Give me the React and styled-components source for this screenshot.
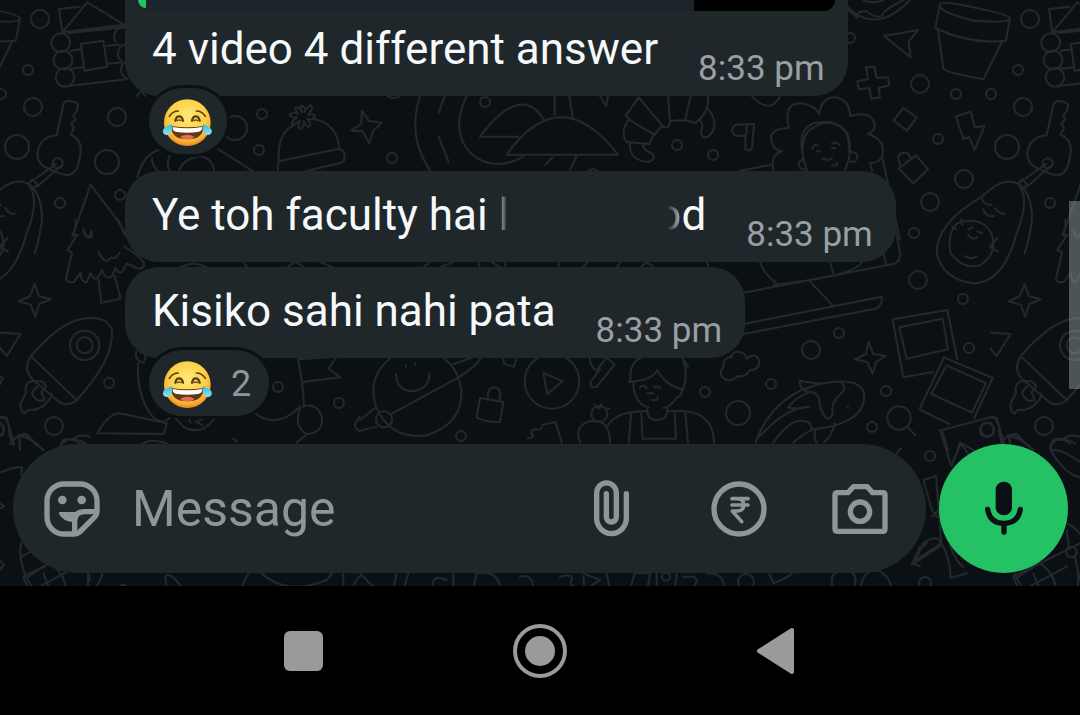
import React from "react";
import styled, { createGlobalStyle } from "styled-components";

const c = {
  wall: "#0b1014",
  doodle: "#22282c",
  panel: "#20272a",
  text: "#f5f9fc",
  time: "#999fa2",
  icon: "#8d9699",
  green: "#24c265",
  nav: "#9a9a9a",
};

const GlobalStyle = createGlobalStyle`
  * { box-sizing: border-box; }
  body { margin: 0; background: #000; font-family: Roboto, "Liberation Sans", sans-serif; }
  button { padding: 0; border: 0; background: none; cursor: pointer; display: grid; place-items: center; }
`;

const Screen = styled.div`
  min-height: 100vh;
  display: flex;
  flex-direction: column;
`;

const Chat = styled.main`
  position: relative;
  isolation: isolate;
  overflow: hidden;
  background: ${c.wall};
  padding-bottom: 13px;
`;

const WallpaperSvg = styled.svg`
  position: absolute;
  inset: 0;
  width: 100%;
  height: 100%;
  z-index: -1;
`;

const Messages = styled.div`
  display: flex;
  flex-direction: column;
  align-items: flex-start;
  padding: 0 24px 28px 125px;
`;

const Bubble = styled.article`
  background: ${c.panel};
  border-radius: ${(p) => (p.$continued ? "0 0 34px 34px" : "34px")};
  margin-top: ${(p) => p.$space || 0}px;
`;

const Quote = styled.div`
  display: flex;
  justify-content: space-between;
  height: 11px;
  margin: 0 13px;
  background: #1d252b;
  border-radius: 0 0 20px 20px;
  overflow: hidden;
`;

const QuoteBar = styled.span`
  width: 8px;
  height: 8px;
  background: ${c.green};
  border-bottom-left-radius: 8px;
`;

const QuoteThumb = styled.span`
  width: 141px;
  background: #000;
`;

const Line = styled.div`
  display: flex;
  align-items: flex-end;
  gap: 40px;
  padding: ${(p) => (p.$continued ? "12px 23px 7px 27px" : "18px 23px 7px 27px")};
`;

const Body = styled.p`
  margin: 0 0 14px;
  font-size: 44px;
  line-height: 52px;
  color: ${c.text};
  white-space: nowrap;
`;

const Time = styled.time`
  font-size: 35px;
  line-height: 40px;
  color: ${c.time};
  white-space: nowrap;
`;

const Faded = styled.span`
  background: linear-gradient(${(p) => p.$to}, ${c.panel} ${(p) => p.$start}%, #b4b8ba);
  background-clip: text;
  -webkit-background-clip: text;
  color: transparent;
`;

const Blank = styled.span`
  display: inline-block;
  width: 147px;
`;

const Reaction = styled.button`
  grid-auto-flow: column;
  gap: 19px;
  height: 66px;
  margin: -8px 0 0 24px;
  padding: 2px ${(p) => (p.$many ? 18 : 15)}px 0 14px;
  border-radius: 33px;
  background: ${c.panel};
  box-shadow: 0 0 0 3px ${c.wall};
  position: relative;
`;

const Count = styled.span`
  font: 36px Roboto, sans-serif;
  color: ${c.icon};
`;

const Composer = styled.form`
  display: flex;
  align-items: center;
  gap: 13px;
  padding: 0 12px 0 13px;
`;

const Field = styled.div`
  flex: 1;
  min-width: 0;
  display: flex;
  align-items: center;
  gap: 65px;
  height: 129px;
  padding: 0 38px 0 31px;
  border-radius: 65px;
  background: ${c.panel};
`;

const Entry = styled.div`
  flex: 1;
  min-width: 0;
  display: flex;
  align-items: center;
  gap: 32px;
`;

const MessageInput = styled.input`
  flex: 1;
  min-width: 0;
  border: 0;
  padding: 0;
  outline: 0;
  background: none;
  font: 50px Roboto, sans-serif;
  color: ${c.text};
  &::placeholder { color: ${c.icon}; opacity: 1; }
`;

const IconSvg = styled.svg`
  display: block;
  flex: none;
  width: 56px;
  height: 56px;
  overflow: visible;
  fill: none;
  stroke: currentColor;
  stroke-width: 16;
  stroke-linecap: round;
  stroke-linejoin: round;
`;

const IconButton = styled.button`
  color: ${c.icon};
`;

const MicButton = styled.button`
  flex: none;
  width: 129px;
  height: 129px;
  border-radius: 50%;
  background: ${c.green};
  color: ${c.wall};
`;

const ScrollThumb = styled.div`
  position: absolute;
  right: 0;
  top: 201px;
  width: 11px;
  height: 188px;
  background: rgba(150, 158, 162, 0.48);
`;

const NavBar = styled.nav`
  flex: 1;
  min-height: 130px;
  background: #000;
  display: flex;
  align-items: center;
  justify-content: center;
`;

const NavButton = styled.button`
  width: 236px;
  height: 80px;
`;

const EmojiSvg = styled.svg`
  display: block;
  width: 49px;
  height: 49px;
  overflow: visible;
`;

function JoyEmoji() {
  return (
    <EmojiSvg viewBox="0 0 147 147" role="img" aria-label="Face with tears of joy">
      <defs>
        <radialGradient id="face" cx="50%" cy="36%" r="64%">
          <stop offset="0.1" stopColor="#fee671" />
          <stop offset="0.6" stopColor="#fdcf45" />
          <stop offset="0.85" stopColor="#f9b032" />
          <stop offset="1" stopColor="#e98722" />
        </radialGradient>
        <linearGradient id="tear" x1="0" y1="0" x2="0" y2="1">
          <stop offset="0" stopColor="#35b5d8" />
          <stop offset="1" stopColor="#8fe6f5" />
        </linearGradient>
      </defs>
      <circle cx="73" cy="74" r="70" fill="url(#face)" />
      <g fill="none" stroke="#5b3b12" strokeLinecap="round">
        <path d="M19 55Q29 39 46 39M127 55Q117 39 100 39" strokeWidth="5" />
        <path d="M37 68Q40 55 48 55Q57 55 60 68M87 68Q90 55 98 55Q107 55 110 68" strokeWidth="7" />
        <path d="M43 68Q48 63 54 68M93 68Q98 63 104 68" strokeWidth="4" />
      </g>
      <path d="M25 84Q73 92 121 84Q122 124 73 124Q24 124 25 84Z" fill="#5c3a16" />
      <path d="M29 87Q73 95 117 87Q118 99 108 101Q73 107 38 101Q28 99 29 87Z" fill="#fffdf5" />
      <path d="M51 117Q73 104 95 117Q87 124 73 124Q59 124 51 117Z" fill="#e9695f" />
      <path d="M26 78Q30 95 23 105Q14 116 3 108Q-5 98 5 89Q13 84 26 78Z" fill="url(#tear)" />
      <path d="M120 78Q116 95 123 105Q132 116 143 108Q151 98 141 89Q133 84 120 78Z" fill="url(#tear)" />
    </EmojiSvg>
  );
}

const circles = [
  [40, 19, 9], [28, 70, 5], [33, 107, 9], [117, 117, 9], [17, 147, 12], [107, 162, 12],
  [60, 203, 5], [120, 195, 5], [235, 128, 12], [262, 114, 5], [259, 150, 5], [485, 102, 5],
  [392, 158, 5], [677, 145, 5], [713, 155, 5], [850, 38, 5], [920, 84, 9], [956, 94, 5],
  [991, 94, 5], [938, 139, 5], [964, 179, 9], [930, 202, 9], [914, 233, 5], [109, 383, 5],
  [54, 426, 9], [278, 387, 5], [339, 403, 5], [705, 392, 5], [461, 436, 5], [918, 280, 9],
  [963, 299, 5], [839, 333, 5], [811, 350, 9], [969, 348, 5], [771, 384, 5], [738, 413, 12],
  [886, 391, 5], [872, 427, 5], [930, 456, 5], [987, 430, 7], [925, 583, 6], [746, 582, 8],
];

const doodles = [
  {
    at: [0, 0],
    d: [
      "M187 97L262 7L372 74ZM187 97L177 27L240 20M205 99L375 82M212 152L246 148M316 138L360 134M212 206L250 202M322 192L365 187M205 258L380 238",
      "M242 132L310 122L322 200L254 212Z",
      "M154 128a28 28 0 1 0 56 0a28 28 0 1 0-56 0M161 180a28 28 0 1 0 56 0a28 28 0 1 0-56 0M167 232a28 28 0 1 0 56 0a28 28 0 1 0-56 0M376 82a28 28 0 0 0-28 44M374 134a28 28 0 0 0-8 50M376 186a28 28 0 0 0 6 50",
      "M170 406L190 315Q194 300 212 304Q236 307 234 318L230 334L220 346L226 358L214 372L222 384L212 404Q246 420 242 454Q236 520 206 525Q185 525 150 508Q112 494 112 462Q118 410 170 406Z",
      "M158 490a15 15 0 1 0 30 0a15 15 0 1 0-30 0M168 492L106 536M182 498L114 558M84 552L98 538L112 554L98 568Z",
      "M410 288L424 272L436 288M412 530Q430 464 476 450M456 474Q456 500 476 514M510 466Q498 490 508 514M536 514Q550 476 598 468Q640 474 642 514M656 448L760 514",
      "M836 482Q832 400 880 376M944 358Q1012 372 1018 448M838 486Q832 486 834 512M836 484L1018 446Q1036 452 1034 474Q1034 486 1020 490L920 512",
      "M906 336Q896 316 908 318Q918 324 914 336Q928 310 936 318Q938 328 924 344Q948 340 944 352Q936 362 922 356Q936 376 926 380Q916 380 912 364Q910 388 900 386Q892 380 900 362Q880 380 876 370Q876 360 892 352Q868 354 870 342Q880 334 894 342Q880 324 890 322Q900 324 906 336Z",
      "M1054 392L1084 372L1086 332L1106 362L1146 368L1120 392L1108 430L1088 394Z",
      "M220 700L272 554L362 674L378 706M250 688Q264 730 274 694M220 700L234 706",
    ],
  },
  {
    at: [360, 0],
    d: [
      "M180 288Q140 410 212 514M254 288L236 338M236 410L266 486M320 288Q270 390 330 458Q400 520 490 470M360 410Q480 250 550 356M360 410H474M440 464Q600 240 774 464ZM584 288V346M628 288L638 350M650 468L628 514M578 472L556 494M720 288L738 318L744 288",
      "M836 292L910 380M836 292L798 346Q802 360 884 404M804 362Q780 400 800 426L868 432Q882 400 884 404L904 380Q930 390 930 364L924 288M930 364Q980 356 1004 370Q1048 340 1044 288M992 288L976 358M1044 326Q1072 360 1060 392Q1034 430 1022 398Q1034 370 1018 360M810 430Q806 482 866 486Q894 474 872 458Q848 450 850 434",
      "M684 514Q700 500 714 514M84 290Q100 298 116 290",
    ],
  },
  {
    at: [720, 0],
    d: [
      "M376 14Q464 110 570 0M376 26Q400 40 412 54Q410 30 440 34Q480 66 492 36Q510 20 550 0M430 0Q460 14 490 0",
      "M492 108L594 90L566 124L572 172Z",
      "M438 202L464 200L470 234L504 232L508 256L476 264L480 292L454 296L448 264L416 268L412 244L444 238Z",
      "M660 12Q670 2 770 24Q870 44 870 56Q866 70 760 62Q650 34 660 12ZM660 12L646 84Q750 134 858 122L870 56M654 88L670 206Q680 218 790 238L846 126",
      "M550 324L590 352L562 392L520 362ZM536 506L588 466L624 508L580 550ZM544 500Q526 466 544 460Q566 454 572 474",
      "M708 350L752 334L764 382L794 378L764 450L748 412L730 416Z",
      "M96 290Q150 344 180 290",
      "M206 380Q190 312 240 310Q284 314 298 342Q304 292 346 292Q390 300 390 348Q460 330 464 376Q464 396 444 402Q500 420 486 470Q476 490 450 488L456 512M206 384Q146 386 154 424Q160 450 186 454Q150 464 160 512",
      "M262 512Q232 440 264 394Q330 340 382 400Q402 450 374 512M250 470Q230 390 280 370Q350 356 376 394Q390 420 386 452M250 478Q232 484 238 500Q242 510 258 508M392 456Q416 456 412 474Q406 490 392 484M276 446Q280 434 292 434M336 430Q350 424 358 434M290 454h10M336 444h10M308 476Q330 484 336 474M336 496Q352 498 352 488",
      "M102 372L48 374Q30 386 40 402Q50 412 76 406V446Q88 458 96 444ZM80 376V402",
      "M486 468L540 720M60 512L154 494",
      "M812 568Q860 530 900 554Q936 584 936 660Q928 720 914 760M812 568L780 594Q650 670 650 760Q670 840 760 850Q850 850 890 700Q930 600 898 556M786 598Q794 616 814 614M790 628Q800 654 822 648M826 624Q840 646 854 640",
      "M712 670Q784 646 814 700Q836 760 780 796Q730 810 692 760Q680 700 712 670ZM696 680L708 688M724 658L728 674M746 688L758 682M772 694L786 700M744 704Q756 722 772 712M734 768Q752 780 770 770M810 740L832 714M810 742L834 754",
    ],
  },
  {
    at: [0, 220],
    d: [
      "M226 0Q230 30 216 44L228 50L202 90L216 98L198 176Q202 190 222 186L242 158Q244 190 260 186L272 160Q282 184 294 172L306 150Q318 182 336 168L346 144Q360 168 370 150L380 130L410 144Q434 150 432 128Q410 100 372 80M250 30Q256 60 276 50L274 32M296 96Q316 140 334 112Q350 120 358 98M354 0L374 44M296 180L304 248L362 236L344 168",
      "M104 192L116 228L152 238L118 252L106 290L92 254L56 244L90 228Z",
      "M92 408Q180 310 240 298Q320 282 336 330Q342 420 230 540ZM210 376a44 44 0 1 0 88 0a44 44 0 1 0-88 0M230 376a24 24 0 1 0 48 0a24 24 0 1 0-48 0M92 410Q66 450 100 480L180 548Q204 560 232 540",
      "M100 482Q70 490 78 520L62 548Q60 574 74 582Q78 566 102 570Q136 562 152 532L154 520M104 486Q130 476 138 500L124 516L134 540Q120 544 110 540M112 500Q84 520 108 536",
      "M-40 335L62 342L20 408Z",
      "M0 592L20 594L40 676M0 610Q16 620 8 644M30 672L54 646L96 660L130 690M292 640Q330 570 370 582L500 610L492 642L296 640M180 680Q206 640 240 672M420 680Q440 650 500 670",
      "M410 394Q400 420 432 428M420 396Q444 400 434 422M414 430Q410 520 450 580Q480 620 510 594M526 594L550 620Q600 650 642 598M566 596L572 608M610 596L588 606L608 616M766 580Q830 630 900 560M894 416Q910 500 912 554M896 418L1010 410L986 446L1020 472L908 486M900 566Q880 620 920 642Q970 640 966 590Q950 546 908 560M890 668L920 642M700 656L712 666M1080 590Q1050 620 1080 634",
      "M540 142Q580 120 620 142M730 126L742 142M862 142L886 124L912 142M960 126L1000 142",
    ],
  },
  {
    at: [360, 220],
    d: [
      "M92 414Q20 470 48 560Q90 660 200 646Q310 610 304 510Q294 444 250 414M0 600L48 562M0 632L50 620M48 598a24 24 0 1 0 48 0a24 24 0 1 0-48 0M90 584L300 470Q350 436 362 414M280 432L334 414M108 462Q110 514 160 514Q210 506 208 458M138 436v4M166 430v4",
      "M430 414L432 432L462 440L470 414M360 534L430 546L420 606Q380 608 350 592ZM384 532Q382 500 408 502Q428 510 418 542",
      "M494 484a82 82 0 1 0 164 0a82 82 0 1 0-164 0M550 458L608 484L562 522Z",
      "M690 414Q690 440 710 452L740 412L764 434L710 500Q690 508 692 486L720 448",
      "M694 582a24 24 0 1 0 48 0a24 24 0 1 0-48 0M704 554L718 566L724 552M736 566L748 566M660 668Q640 610 700 602Q750 602 750 668M504 656L520 650Q506 628 524 628Q544 634 548 614L586 606L606 668",
      "M842 414Q806 430 812 486Q880 480 892 450Q920 500 970 508Q986 460 968 414M806 486H820Q820 550 866 562M966 508Q966 530 950 532Q930 564 910 564M862 564Q860 600 890 600Q924 600 922 564M840 502Q850 492 860 504M884 502Q892 494 900 504M862 520H880M876 540Q894 544 894 530M742 618Q770 572 860 574M926 574Q1060 560 1062 668M814 576L806 668M976 576L984 668M844 578L848 656H948L944 578M968 416L984 440",
      "M190 142L210 126M240 142L280 126M354 124L360 142M396 126L420 142M436 124V142M596 126V142M668 142L686 124M770 142L784 124M842 142Q860 116 880 142M1040 124L1046 142",
    ],
  },
  {
    at: [720, 220],
    d: [
      "M70 218L520 132Q544 124 540 96L520 0M120 126Q130 160 170 190M330 126L340 160M160 194Q400 170 426 126M490 100L498 132M270 184L338 256M70 312L486 230Q486 260 466 266L70 342",
      "M518 298L682 270L712 418M518 298L550 472L640 456M538 322L668 296L684 388L560 416ZM672 412L818 474L762 596M672 412L598 568L688 612M680 436L798 490L756 578L634 522ZM666 630L820 590Q832 592 852 670M666 630L684 690M712 690L720 668L760 690",
      "M446 366L460 402L498 408L468 426L458 462L442 426L404 418L438 402Z",
      "M782 628a20 20 0 1 0 40 0a20 20 0 1 0-40 0M502 594a35 35 0 1 0 70 0a35 35 0 1 0-70 0M564 622L586 646M870 690L868 648Q880 636 940 690",
      "M10 440Q10 410 34 412Q40 388 66 398Q78 404 80 416Q106 394 118 422Q120 450 90 450Q76 474 54 468Q30 490 10 474Q-6 460 10 440Z",
      "M106 668Q160 520 310 490Q420 470 432 520Q440 610 280 628Q250 640 220 668M310 490Q290 492 240 482Q236 510 268 516Q300 514 300 560Q322 620 338 580Q330 550 364 520Q380 500 366 490M268 560Q200 560 118 650M160 668Q220 580 270 610L276 628M286 630Q280 650 290 668M344 610Q340 640 312 668M382 560h2M266 518Q230 530 204 562Q230 570 268 560",
      "M992 690Q990 650 1030 660Q1042 640 1080 650",
    ],
  },
  {
    at: [0, 430],
    d: [
      "M0 128Q40 110 66 112L64 136M64 340Q50 400 100 480M66 380L100 360M80 444L140 404M100 480L230 410M264 424V480M310 424Q300 460 280 480M500 480L496 440Q510 420 550 480M720 480L746 428M780 426Q860 500 980 450L1000 426M1030 426V480M1056 480Q1070 440 1080 440M0 220L12 228L0 236M0 392L12 404L0 420M150 400Q190 424 200 480M350 480Q370 450 390 480",
      "M1080 430L1130 480H1180L1190 430M1210 480L1226 430M1300 480Q1290 430 1340 450M1360 430V480M1420 480L1430 430Q1500 420 1500 480M1560 440Q1600 430 1600 480",
    ],
  },
  {
    at: [560, 430],
    d: [
      "M0 440Q40 430 36 450Q20 460 60 480M70 440L74 480M70 430L120 450L90 470M140 430L150 480M210 480L224 430H270L262 480M290 430V480M306 440a12 12 0 1 0 24 0a12 12 0 1 0-24 0M350 430L344 480M370 440H400Q420 450 400 470M440 430Q500 430 490 480M626 426L640 460Q690 440 700 426M820 480Q800 420 860 420Q900 430 880 480M900 480Q910 410 960 424Q990 440 996 480M1010 70L1022 56M1060 400L1080 350M1060 400L1080 410",
    ],
  },
  {
    at: [900, 430],
    d: [
      "M70 150L108 138L124 340Q150 380 152 444L200 430M70 150L96 240L110 260M96 260L116 240M70 340Q110 310 124 340L46 390ZM124 346L36 404Q50 360 80 340M150 346Q170 400 190 410M120 0L154 108L182 40L204 70M330 36Q320 10 350 12L380 46M296 0Q300 20 304 34",
      "M526 40Q490 20 460 30Q440 60 480 100Q520 150 560 140M452 62Q480 50 560 110M340 440L540 340M340 440L356 480M400 430L420 480M498 366a16 16 0 1 0 32 0a16 16 0 1 0-32 0M506 350L500 300M524 378L540 450M500 280Q530 290 550 330",
    ],
  },
];

function Wallpaper() {
  return (
    <WallpaperSvg aria-hidden="true">
      <defs>
        <g id="doodles" fill="none" stroke={c.doodle} strokeLinecap="round" strokeLinejoin="round">
          {circles.map(([cx, cy, r]) => (
            <circle key={`${cx}-${cy}`} cx={cx} cy={cy} r={r} strokeWidth="2" />
          ))}
          {doodles.map(({ at, d }) => (
            <g key={at.join()} transform={`translate(${at.join(" ")}) scale(0.3333)`} strokeWidth="6">
              {d.map((path) => <path key={path} d={path} />)}
            </g>
          ))}
        </g>
        <pattern id="tile" width="990" height="715" patternUnits="userSpaceOnUse">
          <use href="#doodles" />
          <use href="#doodles" x="-990" />
        </pattern>
      </defs>
      <rect width="100%" height="100%" fill="url(#tile)" />
    </WallpaperSvg>
  );
}

function Message({ children, space, continued }) {
  return (
    <Bubble $space={space} $continued={continued}>
      {continued && <Quote><QuoteBar /><QuoteThumb /></Quote>}
      <Line $continued={continued}>
        <Body>{children}</Body>
        <Time dateTime="20:33">8:33 pm</Time>
      </Line>
    </Bubble>
  );
}

export default function App() {
  return (
    <Screen>
      <GlobalStyle />
      <Chat>
        <Wallpaper />
        <Messages>
          <Message continued>4 video 4 different answer</Message>
          <Reaction type="button"><JoyEmoji /></Reaction>
          <Message space={17}>
            Ye toh faculty hai <Faded $to="to left" $start={10}>l</Faded>
            <Blank />
            <Faded $to="to right" $start={45}>o</Faded>d
          </Message>
          <Message space={5}>Kisiko sahi nahi pata</Message>
          <Reaction type="button" $many><JoyEmoji /><Count>2</Count></Reaction>
        </Messages>
        <Composer onSubmit={(e) => e.preventDefault()}>
          <Field>
            <Entry>
              <IconButton type="button" aria-label="Stickers">
                <IconSvg viewBox="0 0 168 168">
                  <path d="M159 90V60A51 51 0 0 0 108 9H60A51 51 0 0 0 9 60V108A51 51 0 0 0 60 159H92Q100 159 107 153L153 107Q159 100 159 92Z" />
                  <path d="M158 92H122Q92 92 92 122V158" strokeLinecap="butt" />
                  <g fill="currentColor" stroke="none">
                    <circle cx="55" cy="57" r="13" />
                    <circle cx="113" cy="57" r="13" />
                    <path d="M45 93H106Q90 104 86 123Q56 120 45 98Z" />
                  </g>
                </IconSvg>
              </IconButton>
              <MessageInput aria-label="Message" placeholder="Message" />
            </Entry>
            <IconButton type="button" aria-label="Attach">
              <IconSvg viewBox="90 150 168 168">
                <path d="M199 188V262A44 45 0 0 1 110 262V186A29 30 0 0 1 169 186V258A15 15 0 0 1 139 258V188" />
              </IconSvg>
            </IconButton>
            <IconButton type="button" aria-label="Payment">
              <IconSvg viewBox="453 153 168 168">
                <circle cx="537" cy="237" r="75" />
                <path d="M516 206H564M516 225H564M516 206H531Q551 206 551 224Q551 243 531 243H517L545 275" strokeWidth="11" />
              </IconSvg>
            </IconButton>
            <IconButton type="button" aria-label="Camera">
              <IconSvg viewBox="816 153 168 168">
                <path d="M833 188H864L880 170H922L938 188H968Q975 188 975 195V297Q975 304 968 304H833Q825 304 825 297V195Q825 188 833 188Z" />
                <circle cx="900" cy="245" r="29" />
              </IconSvg>
            </IconButton>
          </Field>
          <MicButton type="button" aria-label="Record voice message">
            <IconSvg viewBox="228 151 168 168">
              <rect x="287" y="153" width="49" height="101" rx="24" fill="currentColor" stroke="none" />
              <path d="M263 236Q270 278 312 278Q354 278 361 236M312 278V304" />
            </IconSvg>
          </MicButton>
        </Composer>
        <ScrollThumb />
      </Chat>
      <NavBar aria-label="System navigation">
        <NavButton type="button" aria-label="Recent apps">
          <svg width="40" height="40"><rect width="39" height="40" rx="6" fill={c.nav} /></svg>
        </NavButton>
        <NavButton type="button" aria-label="Home">
          <svg width="54" height="54">
            <circle cx="27" cy="27" r="25" fill="none" stroke={c.nav} strokeWidth="4" />
            <circle cx="27" cy="27" r="15" fill={c.nav} />
          </svg>
        </NavButton>
        <NavButton type="button" aria-label="Back">
          <svg width="38" height="46" viewBox="0 0 38 46">
            <path d="M2 23L35 2V44Z" fill={c.nav} stroke={c.nav} strokeWidth="4" strokeLinejoin="round" />
          </svg>
        </NavButton>
      </NavBar>
    </Screen>
  );
}
